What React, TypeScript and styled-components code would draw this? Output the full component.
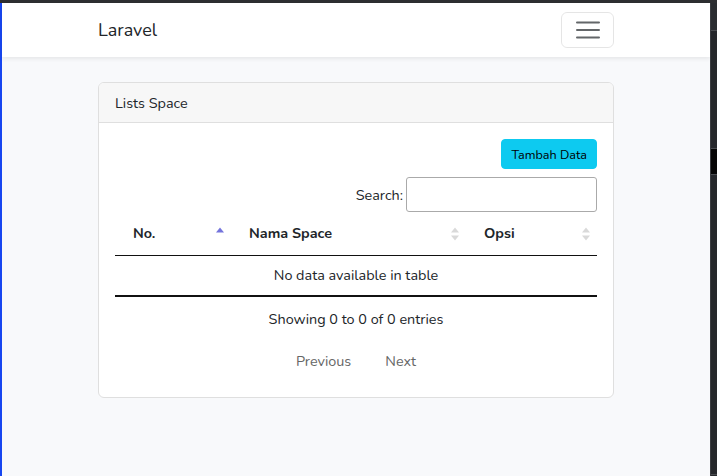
import React from "react";
import styled, { createGlobalStyle } from "styled-components";

const GlobalStyle = createGlobalStyle`
  * { box-sizing: border-box; }
  html, body { margin: 0; padding: 0; }
  body {
    font-family: Nunito, Lato, "Noto Sans", sans-serif;
    font-size: 14.4px;
    color: #212529;
    background: #25272b;
  }
`;

const Frame = styled.div`
  height: 476px;
  display: flex;
  flex-direction: column;
  overflow: hidden;
`;

const TopEdge = styled.div`
  height: 3px;
  background: #2d2e31;
  flex: none;
`;

const Row = styled.div`
  flex: 1;
  display: flex;
  min-height: 0;
`;

const LeftEdge = styled.div`
  width: 2px;
  background: #1746f0;
  flex: none;
`;

const RightEdge = styled.div`
  width: 7px;
  flex: none;
  background: #25272b;
  border-left: 1px solid #3a3c40;
  display: flex;
  flex-direction: column;
`;

const EdgeBlock = styled.div<{ $h: number; $c: string }>`
  height: ${(p) => p.$h}px;
  background: ${(p) => p.$c};
  border-bottom: 1px solid #4a4c50;
  flex: none;
`;

const Main = styled.div`
  flex: 1;
  background: #f8f9fb;
  display: flex;
  flex-direction: column;
`;

const Navbar = styled.nav`
  background: #fff;
  box-shadow: 0 2px 4px rgba(0, 0, 0, 0.075);
  padding: 9px 0;
`;

const Container = styled.div`
  width: 516px;
  margin: 0 auto;
  display: flex;
  align-items: center;
  justify-content: space-between;
`;

const Brand = styled.a`
  font-size: 18px;
  color: #212529;
  text-decoration: none;
  line-height: 27px;
`;

const Toggler = styled.button`
  width: 53px;
  height: 36px;
  border: 1px solid rgba(0, 0, 0, 0.1);
  border-radius: 6px;
  background: transparent;
  display: flex;
  align-items: center;
  justify-content: center;
  padding: 0;
`;

const Content = styled.main`
  padding-top: 25px;
`;

const Card = styled.div`
  width: 516px;
  margin: 0 auto;
  background: #fff;
  border: 1px solid #dfdfdf;
  border-radius: 6px;
  overflow: hidden;
`;

const CardHeader = styled.div`
  background: #f7f7f7;
  border-bottom: 1px solid #dfdfdf;
  height: 40px;
  padding: 0 16px;
  display: flex;
  align-items: center;
`;

const CardBody = styled.div`
  padding: 16px 16px 18px;
  display: flex;
  flex-direction: column;
`;

const Toolbar = styled.div`
  display: flex;
  justify-content: flex-end;
`;

const InfoButton = styled.button`
  height: 30px;
  padding: 0 9px;
  background: #0dcaf0;
  border: 1px solid #0dcaf0;
  border-radius: 4px;
  color: #000;
  font-family: inherit;
  font-size: 12.6px;
`;

const SearchRow = styled.label`
  margin-top: 8px;
  display: flex;
  justify-content: flex-end;
  align-items: center;
  gap: 3px;
`;

const SearchInput = styled.input`
  width: 191px;
  height: 35px;
  border: 1px solid #aaa;
  border-radius: 3px;
  background: #fff;
`;

const Table = styled.table`
  width: 100%;
  border-collapse: collapse;
`;

const Th = styled.th`
  position: relative;
  text-align: left;
  font-weight: 700;
  padding: 10px 18px;
  height: 43px;
  line-height: 23px;
  border-bottom: 1px solid #111;
`;

const SortIcon = styled.svg`
  position: absolute;
  right: 6px;
  top: 50%;
  transform: translateY(-50%);
`;

const EmptyCell = styled.td`
  text-align: center;
  height: 39px;
  padding: 8px 10px;
  line-height: 23px;
  border-bottom: 2px solid #111;
`;

const Info = styled.div`
  padding-top: 11px;
  line-height: 23px;
  text-align: center;
`;

const Paginate = styled.div`
  margin-top: 12px;
  display: flex;
  justify-content: center;
  gap: 6px;
`;

const PageButton = styled.span`
  height: 36px;
  padding: 0 14px;
  display: flex;
  align-items: center;
  color: #666;
`;

const MenuIcon = () => (
  <svg width="30" height="30" viewBox="0 0 30 30">
    <path
      d="M4 7.5h22M4 15h22M4 22.5h22"
      stroke="rgba(33,37,41,0.7)"
      strokeWidth="2"
      strokeLinecap="round"
    />
  </svg>
);

const Sort: React.FC<{ active?: boolean }> = ({ active }) =>
  active ? (
    <SortIcon width="10" height="16" viewBox="0 0 10 16">
      <path d="M1 6.5 L5 1.5 L9 6.5 Z" fill="#7474dc" />
    </SortIcon>
  ) : (
    <SortIcon width="10" height="16" viewBox="0 0 10 16">
      <path d="M1 6.5 L5 1.5 L9 6.5 Z" fill="#d9d9d9" />
      <path d="M1 9.5 L5 14.5 L9 9.5 Z" fill="#d9d9d9" />
    </SortIcon>
  );

export default function App() {
  return (
    <Frame>
      <GlobalStyle />
      <TopEdge />
      <Row>
        <LeftEdge />
        <Main>
          <Navbar>
            <Container>
              <Brand href="#">Laravel</Brand>
              <Toggler aria-label="Toggle navigation">
                <MenuIcon />
              </Toggler>
            </Container>
          </Navbar>
          <Content>
            <Card>
              <CardHeader>Lists Space</CardHeader>
              <CardBody>
                <Toolbar>
                  <InfoButton>Tambah Data</InfoButton>
                </Toolbar>
                <SearchRow>
                  Search:
                  <SearchInput type="search" />
                </SearchRow>
                <Table>
                  <colgroup>
                    <col style={{ width: 116 }} />
                    <col style={{ width: 235 }} />
                    <col style={{ width: 131 }} />
                  </colgroup>
                  <thead>
                    <tr>
                      <Th>
                        No.
                        <Sort active />
                      </Th>
                      <Th>
                        Nama Space
                        <Sort />
                      </Th>
                      <Th>
                        Opsi
                        <Sort />
                      </Th>
                    </tr>
                  </thead>
                  <tbody>
                    <tr>
                      <EmptyCell colSpan={3}>No data available in table</EmptyCell>
                    </tr>
                  </tbody>
                </Table>
                <Info>Showing 0 to 0 of 0 entries</Info>
                <Paginate>
                  <PageButton>Previous</PageButton>
                  <PageButton>Next</PageButton>
                </Paginate>
              </CardBody>
            </Card>
          </Content>
        </Main>
        <RightEdge>
          <EdgeBlock $h={28} $c="#2a2c30" />
          <EdgeBlock $h={118} $c="#25272b" />
          <EdgeBlock $h={26} $c="#050505" />
          <EdgeBlock $h={300} $c="#25272b" />
        </RightEdge>
      </Row>
    </Frame>
  );
}
